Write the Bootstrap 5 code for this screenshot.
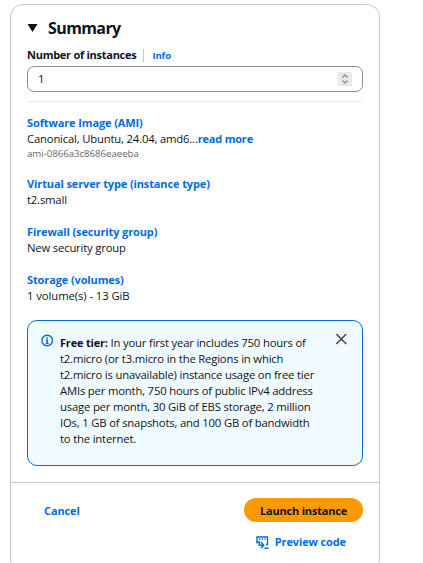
<!DOCTYPE html>
<html lang="en">
<head>
<meta charset="utf-8">
<meta name="viewport" content="width=device-width, initial-scale=1">
<title>Summary</title>
<link href="https://cdn.jsdelivr.net/npm/bootstrap@5.3.0/dist/css/bootstrap.min.css" rel="stylesheet">
<style>
html, body { height: 563px; overflow: hidden; }
body { font: 11.3px/16px "Open Sans", "Noto Sans", sans-serif; letter-spacing: -.185px; color: #0f141a; background: #fff; }
a { color: #006ce0; font-size: 11px; font-weight: 700; letter-spacing: -.12px; text-decoration: none; }
strong { font-size: 11px; font-weight: 700; }
.summary-card { width: 370px; height: 569px; margin: 4px 0 0 10px; border: 1px solid #c6c6cd; border-radius: 13px; }
.summary-main { height: 478px; padding: 13px 16px 0; border-bottom: 1px solid #c6c6cd; }
.summary-title { font-size: 16px; line-height: 20px; font-weight: 700; letter-spacing: -.6px; margin: 0; }
.title-row { gap: 10px; height: 20px; }
.label-row { height: 16px; margin-top: 9px; }
.t-num { letter-spacing: -.27px; }
.info-link { font-size: 9.5px; border-left: 1px solid #c6c6cd; margin-left: 7px; padding-left: 8px; line-height: 13px; }
.count-field { height: 26px; margin-top: 3px; padding: 0 10px; border: 1px solid #8c8c94; border-radius: 7px; }
.count-step { width: 14px; height: 14px; background: #e9e9ed; }
.rule { height: 1px; background: #ebebf0; margin: 9px 0 13px; }
.group { margin-bottom: 16px; }
.group.first { margin-bottom: 15px; }
.ami-id { font-size: 9.7px; line-height: 14px; letter-spacing: -.05px; color: #656871; }
.t-more { letter-spacing: -.2px; }
.t-vol { letter-spacing: -.08px; }
.tier-note { height: 146px; padding: 13px 12px 0 13px; border: 1px solid #006ce0; border-radius: 10px; background: #f0fbff; }
.tier-note p { margin: 1px 0 0 6px; white-space: nowrap; }
.actions { padding: 15px 16px 0 33px; }
.launch { width: 119px; height: 24px; padding: 1px 0 0; border: 0; border-radius: 12px; background: #ff9900; color: #0f141a; font-size: 11px; font-weight: 700; line-height: 23px; letter-spacing: -.2px; }
.cancel { line-height: 24px; padding-top: 1px; }
.preview { gap: 6px; margin: 12px 17px 0 0; }
</style>
<script src="https://cdn.jsdelivr.net/npm/bootstrap@5.3.0/dist/js/bootstrap.bundle.min.js"></script>
</head>
<body>
<section class="summary-card">
  <div class="summary-main">
    <div class="title-row d-flex align-items-center">
      <svg width="11" height="10" viewBox="0 0 11 10"><path d="M.5 1h10L5.500 9z" fill="#0f141a"/></svg>
      <h2 class="summary-title"><span class="t-sum">Summary</span></h2>
    </div>
    <div class="label-row d-flex align-items-center"><strong class="t-num">Number of instances</strong><a class="info-link" href="#">Info</a></div>
    <div class="count-field d-flex align-items-center justify-content-between"><span>1</span>
      <span class="count-step d-flex"><svg width="14" height="14" viewBox="0 0 14 14" fill="none" stroke="#8c8c94" stroke-width="1.300"><path d="M4.500 5.500 7 3l2.500 2.500M4.500 8.500 7 11l2.500-2.500"/></svg></span>
    </div>
    <div class="rule"></div>
    <div class="group first"><a class="d-block" href="#"><span class="t-ami">Software Image (AMI)</span></a><div><span class="t-can">Canonical, Ubuntu, 24.04, amd6...</span><a class="t-more" href="#">read more</a></div><div class="ami-id"><span class="t-id">ami-0866a3c8686eaeeba</span></div></div>
    <div class="group"><a class="d-block" href="#"><span class="t-virt">Virtual server type (instance type)</span></a><div>t2.small</div></div>
    <div class="group"><a class="d-block" href="#"><span class="t-fire">Firewall (security group)</span></a><div><span class="t-new">New security group</span></div></div>
    <div class="group"><a class="d-block" href="#"><span class="t-stor">Storage (volumes)</span></a><div><span class="t-vol">1 volume(s) - 13 GiB</span></div></div>
    <div class="tier-note d-flex align-items-start">
      <svg class="flex-shrink-0" width="13" height="13" viewBox="0 0 13 13" fill="none" stroke="#006ce0" stroke-width="1.400"><circle cx="6.200" cy="6.500" r="5.300"/><path d="M6.200 5.500v4M5 5.700h1.300M4.800 9.200h2.800M6.200 3v1.500"/></svg>
      <p><strong>Free tier:</strong> In your first year includes 750 hours of<br>t2.micro (or t3.micro in the Regions in which<br>t2.micro is unavailable) instance usage on free tier<br>AMIs per month, 750 hours of public IPv4 address<br>usage per month, 30 GiB of EBS storage, 2 million<br>IOs, 1 GB of snapshots, and 100 GB of bandwidth<br>to the internet.</p>
      <svg class="ms-auto flex-shrink-0" width="17" height="12" viewBox="0 0 17 12" fill="none" stroke="#424650" stroke-width="1.500"><path d="m3.300 0 10 10M13.300 0l-10 10"/></svg>
    </div>
  </div>
  <div class="actions d-flex justify-content-between align-items-start">
    <a class="cancel" href="#">Cancel</a>
    <div class="d-flex flex-column align-items-end">
      <button class="launch btn" type="button">Launch instance</button>
      <a class="preview d-flex align-items-center" href="#"><svg width="13" height="13" viewBox="0 0 13 13" fill="none" stroke="#006ce0" stroke-width="1.400"><path d="M1 7.500V1h10.500v7.500H10M3 3.200h1.300M5.700 3.200H7M8.400 3.200h1.300M1 6h2.300v3.200H7.500M4.800 6l3 3.200-3 3M8.500 12.300h4"/></svg><span class="t-prev">Preview code</span></a>
    </div>
  </div>
</section>
</body>
</html>
